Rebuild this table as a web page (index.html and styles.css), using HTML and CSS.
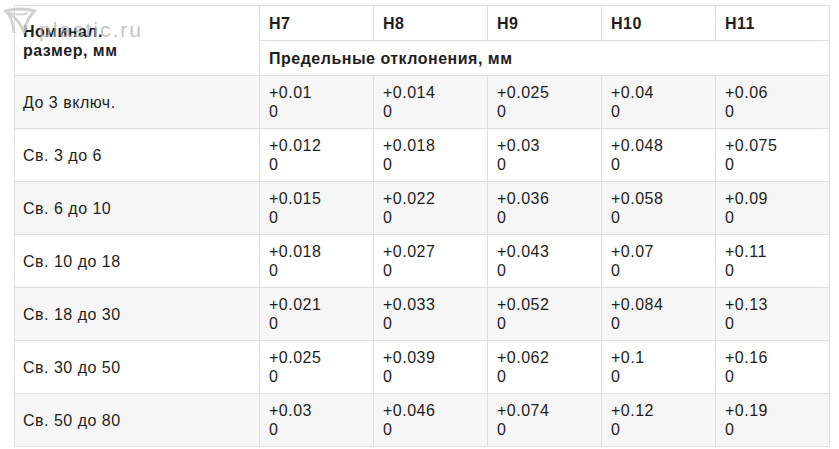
FILE: index.html
```html
<!DOCTYPE html>
<html lang="ru">
<head>
<meta charset="utf-8">
<link rel="stylesheet" href="styles.css">
</head>
<body>
<div class="wrap">
  <table class="tol">
    <thead>
      <tr class="hrow">
        <th rowspan="2" class="first">Номинал.<br>размер, мм</th>
        <th>H7</th><th>H8</th><th>H9</th><th>H10</th><th>H11</th>
      </tr>
      <tr class="hrow">
        <th colspan="5">Предельные отклонения, мм</th>
      </tr>
    </thead>
    <tbody>
      <tr class="odd"><td class="first">До 3 включ.</td><td>+0.01<br>0</td><td>+0.014<br>0</td><td>+0.025<br>0</td><td>+0.04<br>0</td><td>+0.06<br>0</td></tr>
      <tr><td class="first">Св. 3 до 6</td><td>+0.012<br>0</td><td>+0.018<br>0</td><td>+0.03<br>0</td><td>+0.048<br>0</td><td>+0.075<br>0</td></tr>
      <tr class="odd"><td class="first">Св. 6 до 10</td><td>+0.015<br>0</td><td>+0.022<br>0</td><td>+0.036<br>0</td><td>+0.058<br>0</td><td>+0.09<br>0</td></tr>
      <tr><td class="first">Св. 10 до 18</td><td>+0.018<br>0</td><td>+0.027<br>0</td><td>+0.043<br>0</td><td>+0.07<br>0</td><td>+0.11<br>0</td></tr>
      <tr class="odd"><td class="first">Св. 18 до 30</td><td>+0.021<br>0</td><td>+0.033<br>0</td><td>+0.052<br>0</td><td>+0.084<br>0</td><td>+0.13<br>0</td></tr>
      <tr><td class="first">Св. 30 до 50</td><td>+0.025<br>0</td><td>+0.039<br>0</td><td>+0.062<br>0</td><td>+0.1<br>0</td><td>+0.16<br>0</td></tr>
      <tr class="odd"><td class="first">Св. 50 до 80</td><td>+0.03<br>0</td><td>+0.046<br>0</td><td>+0.074<br>0</td><td>+0.12<br>0</td><td>+0.19<br>0</td></tr>
    </tbody>
  </table>
  <svg class="wm-logo" width="36" height="30" viewBox="0 0 36 30">
    <path d="M3 7 Q18 3 33 7 Q25 13 22 28 Q16 13 3 7 Z" fill="none" stroke="#c9c9c9" stroke-width="3" stroke-linejoin="round" opacity="0.85"/>
    <path d="M9 9 Q18 12 26 9" fill="none" stroke="#d6d6d6" stroke-width="2"/>
    <path d="M5 8 Q11 16 12 29" fill="none" stroke="#cfcfcf" stroke-width="2.5"/>
  </svg>
  <span class="wm-text">plastic.ru</span>
</div>
</body>
</html>
```
FILE: styles.css
```css
html, body {
  margin: 0;
  padding: 0;
  background: #ffffff;
}
.wrap {
  position: relative;
  padding: 5px 0 0 14px;
}
.tol {
  border-collapse: collapse;
  font-family: "Liberation Sans", Arial, sans-serif;
  font-size: 16px;
  letter-spacing: 0.5px;
  line-height: 19px;
  color: #1e1e1e;
  table-layout: fixed;
  width: 816px;
}
.tol th, .tol td {
  border: 1px solid #dcdfe3;
  text-align: left;
  vertical-align: middle;
  padding: 0 9px;
  width: 95px;
}
.tol th.first, .tol td.first {
  width: 227px;
  padding-left: 8px;
}
.tol th {
  font-weight: bold;
}
.hrow {
  height: 35px;
}
.tol tbody tr {
  height: 53px;
}
.tol tbody tr.odd {
  background: #f6f6f6;
}
.wm-logo {
  position: absolute;
  left: 2px;
  top: 4px;
  pointer-events: none;
}
.wm-text {
  position: absolute;
  left: 39px;
  top: 18px;
  font-family: "Liberation Sans", Arial, sans-serif;
  font-size: 21px;
  letter-spacing: 2px;
  line-height: 24px;
  color: rgba(175, 175, 175, 0.75);
  pointer-events: none;
}
```
